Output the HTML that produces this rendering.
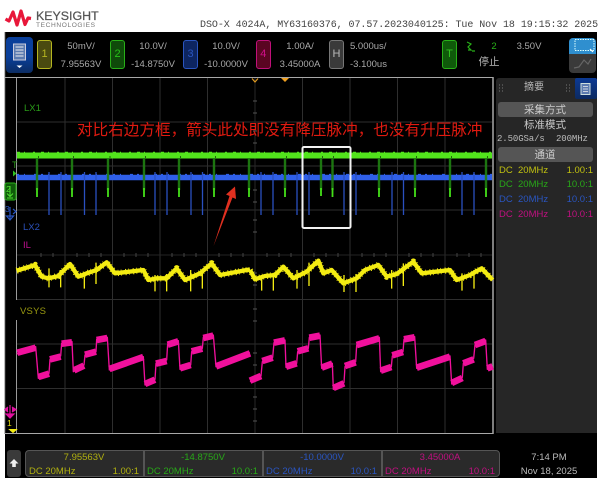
<!DOCTYPE html>
<html><head><meta charset="utf-8"><style>
html,body{margin:0;padding:0;background:#fff;width:601px;height:480px;overflow:hidden}
body{position:relative;font-family:"Liberation Sans","Noto Sans CJK SC",sans-serif}
.t{position:absolute;white-space:nowrap;line-height:1;font-size:9.5px;color:#aaa}
.c{transform:translateX(-50%)}
.r{transform:translateX(-100%)}
.box{position:absolute;box-sizing:border-box;border-radius:3px;text-align:center;font-size:11px}
svg{position:absolute;left:0;top:0}
</style></head><body>
<div style="position:absolute;left:5px;top:32px;width:592px;height:446px;background:#000"></div>

<svg width="601" height="32" viewBox="0 0 601 32"><path d="M5.500 19L9 21L13 12L17 25L21 11L25 24.500L28 18L31 18.500" fill="none" stroke="#e8173a" stroke-width="3.200" stroke-linejoin="round"/></svg>
<div class="t" style="left:36px;top:10px;font-size:12.400px;color:#555;-webkit-text-stroke:.25px #555">KEYSIGHT</div>
<div class="t" style="left:36px;top:22.500px;font-size:6.600px;color:#777;letter-spacing:.6px">TECHNOLOGIES</div>
<div class="t" style="left:200px;top:20.500px;font-family:'Liberation Mono',monospace;font-size:10px;letter-spacing:-.06px;color:#444">DSO-X 4024A, MY63160376, 07.57.2023040125: Tue Nov 18 19:15:32 2025</div>

<div class="box" style="left:6px;top:37px;width:27px;height:36px;border-radius:4px;background:linear-gradient(#0a3f9a 0,#0a3f9a 55%,#0b2c63 100%)"></div>
<svg width="40" height="80" viewBox="0 0 40 80"><rect x="13.500" y="44" width="12" height="16" fill="#5c7bb0" stroke="#ccd" stroke-width="1"/><path d="M15.500 47H23.500M15.500 50H23.500M15.500 53H23.500M15.500 56H23.500" stroke="#eee" stroke-width="1"/><path d="M16.500 65.500h6l-3 2.500z" fill="#fff"/></svg>

<div class="box" style="left:37px;top:40px;width:15px;height:29px;background:#4a4a10;border:1px solid #b5b520;color:#b5b520;line-height:27px">1</div>
<div class="t c" style="left:81px;top:42px">50mV/</div>
<div class="t c" style="left:81px;top:59.500px">7.95563V</div>
<div class="box" style="left:110px;top:40px;width:15px;height:29px;background:#0f4a0a;border:1px solid #28b018;color:#28c018;line-height:27px">2</div>
<div class="t c" style="left:153px;top:42px">10.0V/</div>
<div class="t c" style="left:153px;top:59.500px">-14.8750V</div>
<div class="box" style="left:183px;top:40px;width:15px;height:29px;background:#0d2560;border:1px solid #2a55c0;color:#2a55c0;line-height:27px">3</div>
<div class="t c" style="left:226px;top:42px">10.0V/</div>
<div class="t c" style="left:226px;top:59.500px">-10.0000V</div>
<div class="box" style="left:256px;top:40px;width:14.500px;height:29px;background:#5a0522;border:1px solid #c0107a;color:#d0108a;line-height:27px">4</div>
<div class="t c" style="left:300px;top:42px">1.00A/</div>
<div class="t c" style="left:300px;top:59.500px">3.45000A</div>
<div class="box" style="left:329px;top:40px;width:15px;height:29px;background:#3a3a3a;border:1px solid #777;color:#bbb;line-height:27px">H</div>
<div class="t" style="left:350px;top:42px">5.000us/</div>
<div class="t" style="left:350px;top:59.500px">-3.100us</div>
<div class="box" style="left:442px;top:40px;width:15px;height:29px;background:#0f5a0a;border:1px solid #28b018;color:#30c020;line-height:27px">T</div>
<svg width="601" height="80" viewBox="0 0 601 80"><path d="M467 42l4 2-3 3 3 3-3 0M472 51h3" fill="none" stroke="#28b018" stroke-width="1.200"/></svg>
<div class="t c" style="left:494px;top:41.500px;color:#28b018">2</div>
<div class="t c" style="left:529px;top:42px">3.50V</div>
<div class="t c" style="left:489px;top:57px;font-size:10.500px;color:#bbb">停止</div>

<div class="box" style="left:569px;top:37.500px;width:27px;height:35px;border-radius:4px;background:#3a3a3a;overflow:hidden"><div style="height:16px;background:#2f8fcf"></div></div>
<svg width="601" height="80" viewBox="0 0 601 80"><rect x="575" y="39.500" width="19" height="11" fill="none" stroke="#dff" stroke-width="1" stroke-dasharray="1.500 1"/><path d="M590 49l3 3" stroke="#fff" stroke-width="1.200"/><path d="M574 68l5-1 5-7 4 4 3-5" fill="none" stroke="#666" stroke-width="1.200"/></svg>

<svg width="601" height="480" viewBox="0 0 601 480" style="z-index:1">
<rect x="4" y="32" width="1.200" height="402" fill="#bbb"/>
<path d="M5 77.500H493.500M5 433.500H493.500" stroke="#a8a8a8" stroke-width="1"/>
<path d="M493 77V434" stroke="#a8a8a8" stroke-width="1.500"/>
<path d="M16.500 78V300M16.500 320V433" stroke="#9a9a9a" stroke-width="1"/>
<path d="M65 78V433M112.500 78V433M160 78V433M207.500 78V433M302.500 78V433M350 78V433M397.500 78V433M445 78V433" stroke="#2e2e2e" stroke-width="1"/>
<path d="M17 122H492M17 166H492M17 210H492M17 299.500H492M17 344H492M17 388.500H492" stroke="#2e2e2e" stroke-width="1"/>
<path d="M255 78V433" stroke="#272727" stroke-width="1"/>
<path d="M17 255H492" stroke="#242424" stroke-width="1"/>
<path d="M41 253V257M53 253V257M77 253V257M89 253V257M101 253V257M124 253V257M136 253V257M148 253V257M172 253V257M184 253V257M196 253V257M219 253V257M231 253V257M243 253V257M267 253V257M279 253V257M291 253V257M314 253V257M326 253V257M338 253V257M362 253V257M374 253V257M386 253V257M409 253V257M421 253V257M433 253V257M457 253V257M469 253V257M481 253V257" stroke="#444" stroke-width="1"/>
<path d="M253 101H257M253 113H257M253 131H257M253 143H257M253 190H257M253 202H257M253 220H257M253 232H257M253 273H257M253 285H257M253 309H257M253 321H257M253 353H257M253 365H257M253 397H257M253 409H257M253 421H257" stroke="#555" stroke-width="1"/>

<path d="M252 78.500l3 3.500 3-3.500" fill="none" stroke="#e09a20" stroke-width="1.200"/>
<path d="M281 78h8l-4 4z" fill="#f0a020"/>

<!-- blue -->
<path d="M17 177.500H492" stroke="#2f5fe8" stroke-width="5.500"/>
<path d="M17 174.500H492" stroke="#2f5fe8" stroke-width="1.200" stroke-dasharray="2 5 1 9 3 4"/>
<path d="M49 172V215M61 172V215M84.500 172V215M96 172V215M155 172V215M167 172V215M191 172V215M202.500 172V215M261 172V215M273 172V215M297 172V215M309 172V215M344 172V215M356 172V215M392 172V215M403.500 172V215M462 172V215M474 172V215" stroke="#2a50c0" stroke-width="1.300"/>
<!-- green -->
<path d="M17 155.500H492" stroke="#52e41c" stroke-width="6"/>
<path d="M17 152.300H492" stroke="#52e41c" stroke-width="1" stroke-dasharray="3 4 1 8 2 6"/>
<g stroke="#000" stroke-width=".8" opacity=".7"><path d="M38.500 158V156M73.500 158V156M110 158V156M145.500 158V156M180.500 158V156M215.500 158V156M286.500 158V156M322.500 158V156M333.500 158V156M380.500 158V156M416.500 158V156M451.500 158V156M487.500 158V156"/></g>
<g stroke="#1f7f12" stroke-width="2.400" opacity=".92"><path d="M37 158V190M72 158V190M108 158V190M144 158V190M179 158V190M214 158V190M249 158V190M285 158V190M321 158V190M332.500 158V190M379 158V190M415 158V190M450 158V190M486 158V190"/></g>
<g stroke="#44e018" stroke-width="1.800"><path d="M37 188V197M72 188V197M108 188V197M144 188V197M179 188V197M214 188V197M249 188V197M285 188V197M321 188V196M332.500 188V197M379 188V197M415 188V197M450 188V197M486 188V197"/></g>

<!-- white box -->
<rect x="302.500" y="147" width="48" height="81" rx="1.500" fill="none" stroke="#f2f2f2" stroke-width="2"/>
<!-- red arrow -->
<path d="M213.500 246L229.500 196L226 194.500L235 186.500L236 199L232.500 197.500Z" fill="#e03020"/>

<!-- yellow -->
<g transform="translate(0,250) scale(.33333)" fill="none" stroke-linejoin="round">
<path d="M50 62L105 45L125 80L145 85L175 78L210 42L235 80L260 70L290 60L320 37L345 70L430 60L445 90L470 85L500 85L530 55L555 90L600 70L635 40L660 75L750 58" stroke="#f4ec12" stroke-width="13"/>
<path d="M50 62L105 45L125 80L145 85L175 78L210 42L235 80L260 70L290 60L320 37L345 70L430 60L445 90L470 85L500 85L530 55L555 90L600 70L635 40L660 75L750 58" stroke="#f4ec12" stroke-width="19" stroke-dasharray="3 7 2 11"/>
<path d="M147 55V112M182 60V112M253 70V116M288 38V102M465 75V124M500 72V124M572 60V124M607 60V116" stroke="#f4ec12" stroke-width="4"/>
</g>
<g transform="translate(250,250) scale(.33333)" fill="none" stroke-linejoin="round">
<path d="M0 60L15 88L45 78L75 75L100 50L130 85L170 65L205 32L220 70L245 60L280 100L320 85L345 60L385 45L410 80L440 72L490 35L515 70L600 60L620 90L660 75L695 55L728 90" stroke="#f4ec12" stroke-width="13"/>
<path d="M0 60L15 88L45 78L75 75L100 50L130 85L170 65L205 32L220 70L245 60L280 100L320 85L345 60L385 45L410 80L440 72L490 35L515 70L600 60L620 90L660 75L695 55L728 90" stroke="#f4ec12" stroke-width="19" stroke-dasharray="3 7 2 11"/>
<path d="M35 75V122M70 70V122M141 60V116M177 38V108M282 75V126M318 72V126M425 60V116M460 40V108M636 70V122M672 60V116" stroke="#f4ec12" stroke-width="4"/>
</g>
<!-- magenta -->
<g transform="translate(0,250) scale(.33333)" fill="none" stroke-linejoin="round" stroke="#f0109c">
<path d="M50 312L107 290L115 385L147 370L150 328L182 318L185 280L216 275L220 365L252 345L255 315L288 305L290 268L322 262L328 360L430 320L435 405L465 388L468 340L500 330L503 282L535 272L540 358L572 345L575 305L607 295L610 262L640 255L648 350L750 308" stroke-width="4"/>
<path d="M52 308L107 293M115 381L147 371M150 328L182 320M185 281L216 277M222 361L252 347M255 314L288 305M290 270L322 264M328 357L430 321M435 402L465 389M468 341L500 333M503 284L535 274M540 355L572 345M575 304L607 296M610 264L640 257M648 349L750 310" stroke-width="20"/>
</g>
<g transform="translate(250,250) scale(.33333)" fill="none" stroke-linejoin="round" stroke="#f0109c">
<path d="M0 395L33 378L37 335L68 322L72 278L105 270L108 352L140 340L143 305L175 295L178 262L210 255L215 355L247 340L250 418L282 398L285 350L317 335L320 285L388 262L392 365L424 350L427 318L459 305L462 268L494 260L500 355L600 318L605 402L637 382L640 340L671 325L675 285L707 270L712 358L728 348" stroke-width="4"/>
<path d="M0 392L33 378M37 333L68 323M72 278L105 271M108 350L140 340M143 304L175 295M178 263L210 257M215 353L247 341M250 414L282 400M285 348L317 337M320 285L388 265M392 362L424 351M427 316L459 306M462 268L494 262M500 353L600 320M605 399L637 384M640 340L671 328M675 285L707 273M712 355L728 349" stroke-width="20"/>
</g>

<!-- left markers -->
<path d="M13 170.500l3.500 3-3.500 3z" fill="#30c020"/>
<rect x="5" y="183" width="11" height="17" rx="2" fill="#0f5a0a" stroke="#28b018" stroke-width="1"/>
<path d="M10 186V196M7 193.500l3 3 3-3M7 198H13" fill="none" stroke="#50e030" stroke-width="1"/>
<path d="M10 207V219M6.500 216h7l-3.500 4zM13 209l3 2.500-3 2.500" fill="none" stroke="#2a55c0" stroke-width="1.200"/>
<path d="M10 405V418M6 414h8l-4 4zM12 407l4 2.500-4 2.500M8 407l-3 2.500 3 2.500" fill="#e010a0" stroke="#e010a0" stroke-width="1.200"/>
<path d="M13 429V432M9.500 429.500h7l-3.500 3z" fill="#f4ec12" stroke="#f4ec12" stroke-width="1"/>
</svg>

<div style="z-index:2;position:absolute;left:0;top:0">
<div class="t" style="left:12px;top:161px;font-size:9px;color:#2a9a18">T</div>
<div class="t" style="left:6px;top:185px;font-size:8.500px;color:#50e030">2</div>
<div class="t" style="left:5px;top:205px;font-size:8.500px;color:#2a55c0">3</div>
<div class="t" style="left:7px;top:419px;font-size:8.500px;color:#e8e010">1</div>
<div class="t" style="left:24px;top:103.500px;font-size:9.500px;color:#2a9a18">LX1</div>
<div class="t" style="left:23px;top:223px;font-size:9.500px;color:#2a50b8">LX2</div>
<div class="t" style="left:23px;top:241px;font-size:9.500px;color:#c01090">IL</div>
<div class="t" style="left:20px;top:306.500px;font-size:9.500px;color:#9a9a10;letter-spacing:.2px">VSYS</div>
<div class="t" style="left:77px;top:123px;font-size:15.600px;color:#e01a10">对比右边方框，箭头此处即没有降压脉冲，也没有升压脉冲</div>
</div>

<!-- right panel -->
<div style="position:absolute;left:495.500px;top:78px;width:101.500px;height:355px;background:#262626;border-radius:3px 3px 0 0"></div>
<div style="position:absolute;left:574.500px;top:78px;width:22.500px;height:21px;background:linear-gradient(#0c3a94,#0c2a60);border-radius:2px"></div>
<svg width="601" height="110" viewBox="0 0 601 110" style="z-index:1"><rect x="581" y="83.500" width="9" height="11" fill="#5c7bb0" stroke="#cdd" stroke-width="1"/><path d="M583 86.500H588M583 89H588M583 91.500H588" stroke="#eee" stroke-width=".8"/><path d="M499 85h1M502 85h1M499 88h1M502 88h1M499 91h1M502 91h1M566 85h1M569 85h1M566 88h1M569 88h1M566 91h1M569 91h1" stroke="#777" stroke-width="1"/></svg>
<div class="t c" style="left:534px;top:83px;font-size:10px;color:#bbb">摘要</div>
<div style="position:absolute;left:498px;top:102px;width:95px;height:15px;background:#555;border-radius:3px"></div>
<div class="t c" style="left:545px;top:104.500px;font-size:10.500px;color:#ccc">采集方式</div>
<div class="t c" style="left:545px;top:120px;font-size:10.500px;color:#ccc">标准模式</div>
<div class="t" style="left:497px;top:135px;font-family:'Liberation Mono',monospace;font-size:9px;letter-spacing:-.1px;color:#bbb">2.50GSa/s</div>
<div class="t" style="left:556px;top:135px;font-family:'Liberation Mono',monospace;font-size:9px;letter-spacing:-.1px;color:#bbb">200MHz</div>
<div style="position:absolute;left:498px;top:147px;width:95px;height:15px;background:#555;border-radius:3px"></div>
<div class="t c" style="left:545px;top:149.500px;font-size:10.500px;color:#ccc">通道</div>
<div class="t" style="left:499px;top:165.500px;color:#c0c010">DC&nbsp; 20MHz</div><div class="t r" style="left:593px;top:165.500px;color:#c0c010">1.00:1</div>
<div class="t" style="left:499px;top:180px;color:#28a818">DC&nbsp; 20MHz</div><div class="t r" style="left:593px;top:180px;color:#28a818">10.0:1</div>
<div class="t" style="left:499px;top:195px;color:#2a55c0">DC&nbsp; 20MHz</div><div class="t r" style="left:593px;top:195px;color:#2a55c0">10.0:1</div>
<div class="t" style="left:499px;top:209.500px;color:#c01080">DC&nbsp; 20MHz</div><div class="t r" style="left:593px;top:209.500px;color:#c01080">10.0:1</div>

<!-- bottom bar -->
<div style="position:absolute;left:7px;top:450px;width:14px;height:27px;background:#3a3a3a;border-radius:3px"></div>
<svg width="30" height="480" viewBox="0 0 30 480" style="z-index:1"><path d="M14 459l4.500 4.500h-2.700v3.500h-3.600v-3.500h-2.700z" fill="#f0f0f0"/></svg>
<div style="position:absolute;left:25px;top:450px;width:475px;height:27px;background:#2a2a2a;border:1px solid #555;box-sizing:border-box;border-radius:4px"></div>
<div style="position:absolute;left:143px;top:450px;width:1.500px;height:27px;background:#555"></div>
<div style="position:absolute;left:262px;top:450px;width:1.500px;height:27px;background:#555"></div>
<div style="position:absolute;left:381px;top:450px;width:1.500px;height:27px;background:#555"></div>
<div class="t c" style="left:84px;top:453px;color:#b0b010">7.95563V</div>
<div class="t" style="left:29px;top:467px;color:#b0b010">DC 20MHz</div><div class="t r" style="left:139px;top:467px;color:#b0b010">1.00:1</div>
<div class="t c" style="left:203px;top:453px;color:#28a818">-14.8750V</div>
<div class="t" style="left:147px;top:467px;color:#28a818">DC 20MHz</div><div class="t r" style="left:258px;top:467px;color:#28a818">10.0:1</div>
<div class="t c" style="left:322px;top:453px;color:#2a55c0">-10.0000V</div>
<div class="t" style="left:266px;top:467px;color:#2a55c0">DC 20MHz</div><div class="t r" style="left:377px;top:467px;color:#2a55c0">10.0:1</div>
<div class="t c" style="left:440px;top:453px;color:#c01080">3.45000A</div>
<div class="t" style="left:385px;top:467px;color:#c01080">DC 20MHz</div><div class="t r" style="left:495px;top:467px;color:#c01080">10.0:1</div>
<div class="t c" style="left:549px;top:453px;color:#bbb">7:14 PM</div>
<div class="t c" style="left:549px;top:466.500px;color:#bbb">Nov 18, 2025</div>
</body></html>
